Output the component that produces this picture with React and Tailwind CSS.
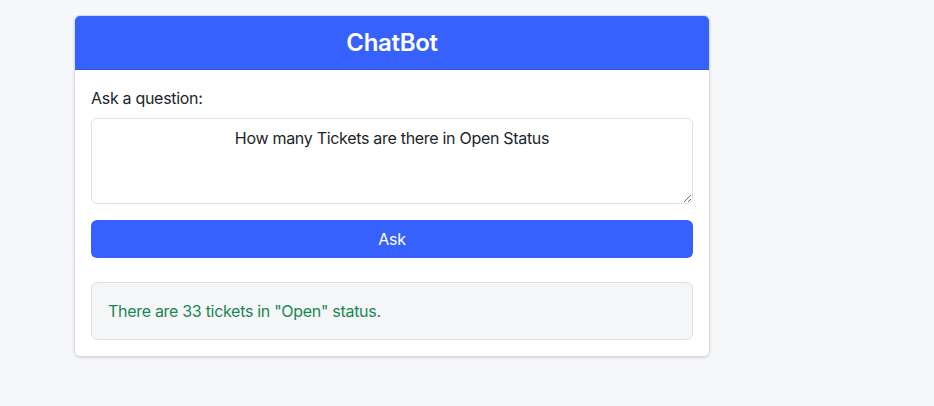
import React, { useState } from "react";

export default function App() {
  const [question, setQuestion] = useState("How many Tickets are there in Open Status");
  const [answer] = useState('There are 33 tickets in "Open" status.');

  return (
    <div className="min-h-screen bg-[#f6f7f9] pt-[15px] pl-[74px] font-['Inter',sans-serif] tracking-[-0.3px] text-[#212529]">
      <div className="w-[636px] bg-white border border-[#d8dbe0] rounded-md shadow-sm overflow-hidden">
        {/* Header */}
        <div className="h-[54px] bg-[#3761fd] border-b border-[#2f55e0] flex items-center justify-center">
          <h1 className="text-white text-2xl font-semibold">ChatBot</h1>
        </div>

        {/* Body */}
        <div className="p-4">
          <label className="block text-base leading-6 mb-2">Ask a question:</label>
          <textarea
            value={question}
            onChange={e => setQuestion(e.target.value)}
            className="block w-full h-[86px] border border-[#dee2e6] rounded-md px-3 py-[7px] text-base leading-6 text-center outline-none"
          />
          <button className="mt-4 w-full h-[38px] rounded-md bg-[#3761fd] text-white text-base">
            Ask
          </button>
          <div className="mt-6 h-[58px] border border-[#dee2e6] bg-[#f5f6f8] rounded-md px-4 flex items-center">
            <p className="text-[#198754] text-base">{answer}</p>
          </div>
        </div>
      </div>
    </div>
  );
}
